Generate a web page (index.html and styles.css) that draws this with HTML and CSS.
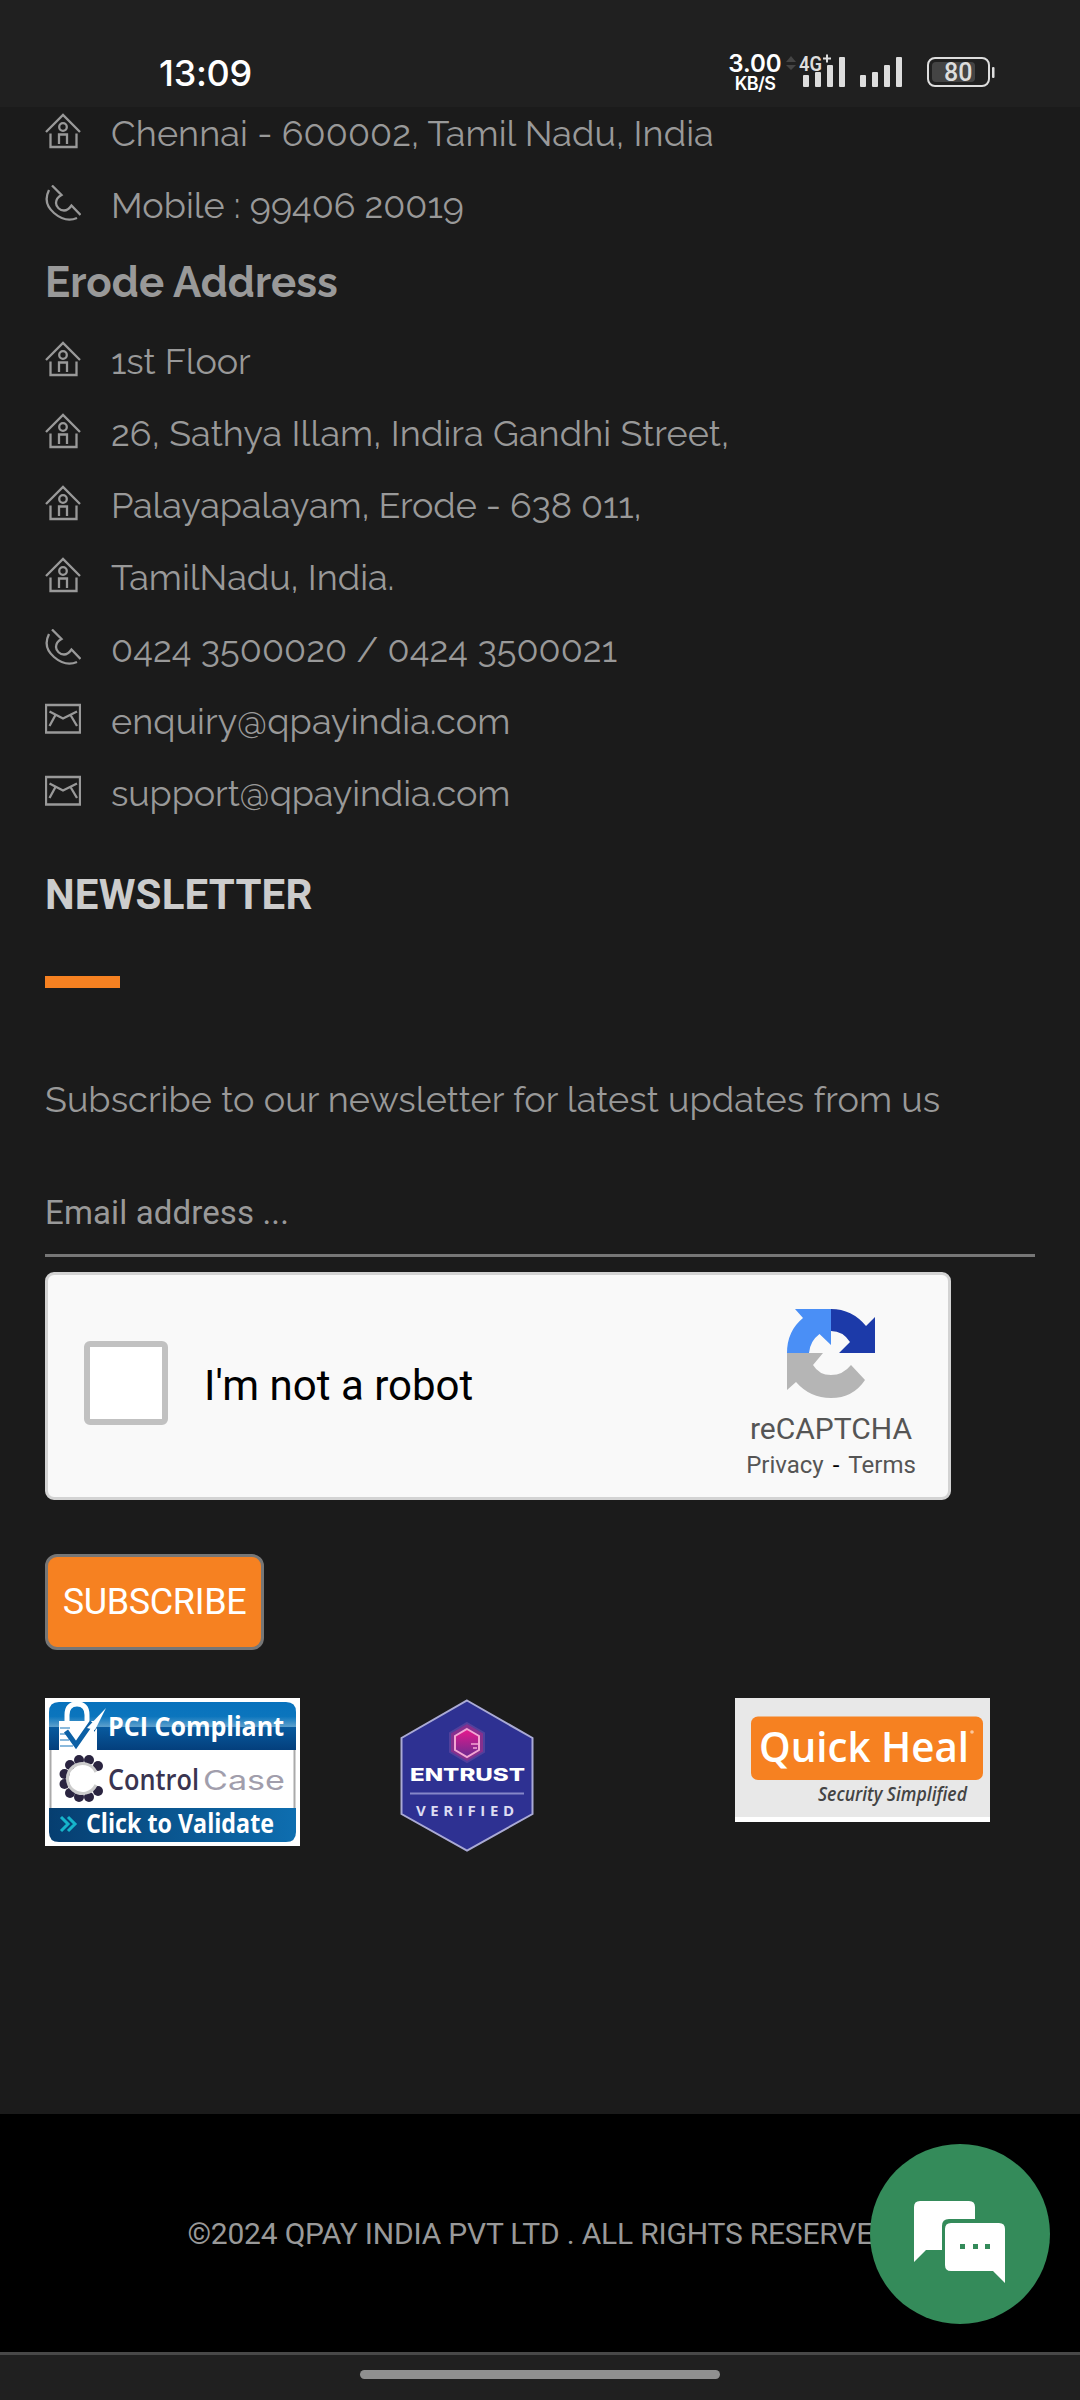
FILE: index.html
```html
<!DOCTYPE html>
<html lang="en">
<head>
<meta charset="utf-8">
<title>QPay India</title>
<link rel="stylesheet" href="styles.css">
</head>
<body>
<svg class="sprite" aria-hidden="true">
  <symbol id="home" viewBox="0 0 36 36"><path d="M1 19 18 2 35 19M5.500 20.500V34H31.500V20.500M14 31V21.500H22V31"/><circle cx="18" cy="14" r="3.800"/></symbol>
  <symbol id="phone" viewBox="0 0 36 36"><path d="M7 0.500 16.500 10Q11 13 11 18C11 22 15 25.500 19 25.500Q23 25.500 26.500 20.500L35.500 30M4 5C-1 15 2 22 9 28C16 34 23 37 32 33"/></symbol>
  <symbol id="mail" viewBox="0 0 36 36"><path d="M1 4H35V31.500H1ZM4.500 10.500 18 17.500 32 10.500M10.500 14 4.500 25M25.500 14 32 25"/></symbol>
</svg>
<div class="screen">
  <header class="status">
    <span class="clock">13:09</span>
    <div class="speed"><b>3.00</b><span>KB/S</span></div>
    <svg class="signals" width="120" height="46" viewBox="0 0 120 46">
      <path fill="#444" d="M0 12 5 6 10 12ZM0 15H10L5 20Z"/>
      <g fill="#ddd"><rect x="17" y="25" width="6" height="12" rx="1"/><rect x="29" y="22" width="6" height="15" rx="1"/><rect x="41" y="15" width="6" height="22" rx="1"/><rect x="53" y="7" width="6" height="30" rx="1"/><rect x="74" y="25" width="6" height="12" rx="1"/><rect x="86" y="22" width="6" height="15" rx="1"/><rect x="98" y="15" width="6" height="22" rx="1"/><rect x="110" y="7" width="6" height="30" rx="1"/></g>
      <text class="net" x="13" y="20.500" textLength="23" lengthAdjust="spacingAndGlyphs">4G</text>
      <path d="M37 8.500H45M41 4.500V12.500" stroke="#ddd" stroke-width="2"/>
    </svg>
    <svg class="battery" width="68" height="30" viewBox="0 0 68 30">
      <rect x="1" y="1" width="61" height="28" rx="7" fill="none" stroke="#ddd" stroke-width="2"/><rect x="5" y="5" width="43" height="20" rx="4" fill="#444"/><rect x="65" y="10" width="2.500" height="11" rx="1" fill="#ddd"/>
      <text class="level" x="17" y="24">80</text>
    </svg>
  </header>
  <main class="content">
    <ul class="contacts">
      <li><svg><use href="#home"/></svg><span class="wide">Chennai - 600002, Tamil Nadu, India</span></li>
      <li><svg><use href="#phone"/></svg><span>Mobile : 99406 20019</span></li>
    </ul>
    <h3 class="branch">Erode Address</h3>
    <ul class="contacts plain">
      <li><svg><use href="#home"/></svg><span class="tight">1st Floor</span></li>
      <li><svg><use href="#home"/></svg><span class="wide">26, Sathya Illam, Indira Gandhi Street,</span></li>
      <li><svg><use href="#home"/></svg><span class="tight">Palayapalayam, Erode - 638 011,</span></li>
      <li><svg><use href="#home"/></svg><span>TamilNadu, India.</span></li>
      <li><svg><use href="#phone"/></svg><span class="wide">0424 3500020 / 0424 3500021</span></li>
      <li><svg><use href="#mail"/></svg><span class="wide">enquiry@qpayindia.com</span></li>
      <li><svg><use href="#mail"/></svg><span class="tight">support@qpayindia.com</span></li>
    </ul>
    <h2 class="title">NEWSLETTER</h2>
    <div class="rule"></div>
    <p class="lead">Subscribe to our newsletter for latest updates from us</p>
    <div class="email">Email address ...</div>
    <div class="captcha">
      <div class="box"></div>
      <span class="robot">I'm not a robot</span>
      <div class="brand">
        <svg width="90" height="92" viewBox="0 0 90 92">
          <path fill="#4a8ff6" d="M9 1H45V37L33.500 26Q24 33 23 45H1Q1 23 17 10Z"/>
          <path fill="#1c3aa9" d="M45 1Q66 1 80 18L89 9V45H53L64 34Q57 23 45 23Z"/>
          <path fill="#b5b5b5" d="M1 45H37L27 57Q33 67 45 67Q57 67 65 57L79 72Q67 90 45 90Q24 90 10 74L1 82Z"/>
        </svg>
        <span class="name">reCAPTCHA</span>
        <span class="legal"><span>Privacy</span><i>-</i><span>Terms</span></span>
      </div>
    </div>
    <button class="subscribe">SUBSCRIBE</button>
    <div class="badges">
      <svg width="255" height="148" viewBox="0 0 255 148">
        <defs>
          <linearGradient id="pt" x2="0" y2="1"><stop stop-color="#0872bd"/><stop offset=".3" stop-color="#0b75bd"/><stop offset=".51" stop-color="#5b9fcc"/><stop offset=".53" stop-color="#085a9e"/><stop offset="1" stop-color="#043f7c"/></linearGradient>
          <linearGradient id="pb"><stop stop-color="#063e70"/><stop offset="1" stop-color="#0e6eb0"/></linearGradient>
        </defs>
        <rect width="255" height="148" fill="#fff"/>
        <path d="M4 52V14Q4 4 14 4H241Q251 4 251 14V52Z" fill="url(#pt)"/>
        <path d="M5.500 52V111M249.500 52V111" stroke="#aaa" stroke-width="2"/>
        <path d="M4 110H251V134Q251 144 241 144H14Q4 144 4 134Z" fill="url(#pb)"/>
        <path d="M22 25V17Q22 6 32 6T42 17V25" fill="none" stroke="#fff" stroke-width="5"/>
        <path d="M14 23H49V34L52 30V52H14Z" fill="#fff"/>
        <path d="M15 30H25M15 36H23M15 42H24M15 48H28" stroke="#8ab9dc" stroke-width="2"/>
        <path d="M21 33 31 47 47 24" fill="none" stroke="#0c60a5" stroke-width="5"/>
        <path d="M42 30 61 10 50 32Z" fill="#fff"/>
        <text x="63" y="38" class="pci" textLength="176" lengthAdjust="spacingAndGlyphs">PCI Compliant</text>
        <g fill="#2a2440"><circle cx="53" cy="68" r="5"/><circle cx="44" cy="62" r="5"/><circle cx="34" cy="62" r="5"/><circle cx="25" cy="67" r="5"/><circle cx="19.500" cy="76" r="5"/><circle cx="19.500" cy="86" r="5"/><circle cx="25" cy="95" r="5"/><circle cx="34" cy="99" r="5"/><circle cx="44" cy="99" r="5"/><circle cx="53" cy="93" r="5"/></g>
        <path d="M51 74A15 15 0 1 0 51 87" fill="none" stroke="#ccc" stroke-width="3"/>
        <text x="63" y="92" class="control" textLength="91" lengthAdjust="spacingAndGlyphs">Control</text>
        <text x="158" y="92" class="case" textLength="82" lengthAdjust="spacingAndGlyphs">Case</text>
        <path d="M16 119 23 126 16 133M23 119 30 126 23 133" fill="none" stroke="#16b5cb" stroke-width="3"/>
        <text x="41" y="135" class="pci" textLength="188" lengthAdjust="spacingAndGlyphs">Click to Validate</text>
      </svg>
      <svg class="entrust" width="138" height="154" viewBox="0 0 138 154">
        <defs><linearGradient id="eg" x2="0" y2="1"><stop stop-color="#e8188c"/><stop offset="1" stop-color="#6a2c91"/></linearGradient></defs>
        <path d="M69 2.500 134.500 40V116L69 152.500 3.500 116V40Z" fill="#2e3192" stroke="#aaaad5" stroke-width="2"/>
        <path d="M69 25 86 35V54L69 64 52 54V35Z" fill="#86308e" stroke="#51409c" stroke-width="2"/>
        <path d="M69 31 81 38V52L69 59 57 52V38Z" fill="url(#eg)" stroke="#f3a5d4" stroke-width="2"/>
        <path d="M73 46H81M75 50H79" stroke="#f3a5d4" stroke-width="1.500"/>
        <text x="12" y="83" class="ent" textLength="115" lengthAdjust="spacingAndGlyphs">ENTRUST</text>
        <path d="M12 95.500H126" stroke="#8587c8" stroke-width="2"/>
        <text x="18" y="117.500" class="ver" textLength="98">VERIFIED</text>
      </svg>
      <svg class="heal" width="255" height="124" viewBox="0 0 255 124">
        <rect width="255" height="124" fill="#fff"/><rect width="255" height="119" fill="#e8e8e8"/>
        <rect x="16" y="18.500" width="232" height="63.500" rx="7" fill="#f68121"/>
        <text x="24" y="64" class="qh" textLength="210" lengthAdjust="spacingAndGlyphs">Quick Heal</text>
        <circle cx="237" cy="34" r="1.800" fill="#fbc79c"/>
        <text x="83" y="103" class="sec" textLength="149" lengthAdjust="spacingAndGlyphs">Security Simplified</text>
      </svg>
    </div>
  </main>
  <footer class="footer"><span>©2024 QPAY INDIA PVT LTD . ALL RIGHTS RESERVED</span>
    <div class="chat">
      <svg width="92" height="84" viewBox="0 0 92 84"><path fill="#fff" d="M6 0H55Q61 0 61 6V18H35Q28 18 28 25V49H12L0 61V6Q0 0 6 0Z"/><path fill="#fff" d="M37 22H85Q91 22 91 28V82L79 70H37Q31 70 31 64V28Q31 22 37 22Z"/><path fill="#348b5a" d="M46 43H51V48H46ZM59 43H64V48H59ZM71 43H76V48H71Z"/></svg>
    </div>
  </footer>
  <nav class="gesture"><div></div></nav>
</div>
</body>
</html>
```
FILE: styles.css
```css
* { box-sizing: border-box; }
body { margin: 0; background: #1b1b1b; color: #999; font-family: Raleway, Lato, sans-serif; }
h2, h3, p, ul { margin: 0; padding: 0; }
.sprite { position: absolute; width: 0; height: 0; }
.screen { width: 1080px; height: 2400px; display: flex; flex-direction: column; overflow: hidden; }
.status { height: 107px; flex: none; background: #202020; display: flex; color: #fff; font-family: Inter, sans-serif; position: relative; z-index: 1; }
.clock { margin: 50px 0 0 159px; width: 568px; font-size: 36px; line-height: 46px; font-weight: 500; letter-spacing: -.3px; }
.speed { width: 56px; margin-top: 52px; display: flex; flex-direction: column; align-items: center; font-weight: 600; }
.speed b { font-size: 24px; font-weight: 600; line-height: 24px; }
.speed span { font-size: 18px; line-height: 16px; letter-spacing: -.6px; }
.signals { margin: 50px 0 0 3px; }
.battery { margin: 57px 0 0 21px; }
.net { font: 600 21px Roboto, sans-serif; fill: #ddd; }
.level { font: 500 25px Roboto, sans-serif; fill: #ddd; }
.content { height: 2007px; flex: none; padding: 0 45px; display: flex; flex-direction: column; align-items: flex-start; }
.contacts { list-style: none; margin-top: -11px; font-size: 36px; line-height: 74px; }
.contacts.plain { margin-top: 0; }
.contacts li { display: flex; gap: 30px; height: 72px; white-space: nowrap; }
.contacts svg { width: 36px; height: 36px; margin-top: 17px; fill: none; stroke: #999; stroke-width: 2.3; }
.wide { letter-spacing: .1px; }
.tight { letter-spacing: -.1px; }
.branch { height: 84px; font-size: 42px; line-height: 86px; font-weight: 700; letter-spacing: .07px; }
.title { margin-top: 44px; font: 700 42px/46px Roboto, sans-serif; color: #ccc; letter-spacing: .2px; }
.rule { width: 75px; height: 12px; margin-top: 58px; background: #f68121; }
.lead { margin-top: 89px; font-size: 36px; line-height: 44px; letter-spacing: .06px; white-space: nowrap; }
.email { width: 990px; height: 92px; margin-top: 44px; padding-top: 28px; border-bottom: 3px solid #767676; font: 33px/40px Roboto, sans-serif; letter-spacing: .13px; }
.captcha { width: 906px; height: 228px; margin-top: 15px; border: 3px solid #d3d3d3; border-radius: 9px; background: #f9f9f9; display: flex; font-family: Roboto, sans-serif; }
.box { width: 84px; height: 84px; margin: 66px 36px 0; border: 6px solid #c1c1c1; border-radius: 6px; background: #fff; }
.robot { width: 532px; margin-top: 86px; font-size: 42px; line-height: 50px; color: #000; }
.brand { display: flex; flex-direction: column; align-items: center; margin-top: 33px; width: 190px; color: #555; }
.name { font-size: 30px; line-height: 36px; margin-top: 11px; }
.legal { display: flex; gap: 9px; font-size: 24px; line-height: 28px; margin-top: 4px; }
.legal i { color: #000; font-style: normal; }
.subscribe { width: 219px; height: 96px; margin-top: 54px; padding: 0; border: 3px solid #767676; border-radius: 12px; background: #f68121; color: #fff; font: 36px Roboto, sans-serif; letter-spacing: -.35px; }
.badges { display: flex; align-items: flex-start; margin-top: 48px; }
.entrust { margin-left: 98px; }
.heal { margin-left: 199px; }
.pci { font: 700 26px "Open Sans", sans-serif; fill: #fff; }
.control { font: 600 28px "Open Sans", sans-serif; fill: #3a3450; }
.case { font: 400 27px Inter, sans-serif; fill: #a19eac; }
.ent { font: 800 17px Inter, sans-serif; fill: #fff; }
.ver { font: 700 15px "Open Sans", sans-serif; fill: #dcdcf2; }
.qh { font: 600 41px "Open Sans", sans-serif; fill: #fff; }
.sec { font: italic 600 19px "Open Sans", sans-serif; fill: #444; }
.footer { height: 238px; flex: none; background: #000; display: flex; justify-content: center; position: relative; padding-top: 102px; font: 30px/36px Roboto, sans-serif; letter-spacing: -.2px; white-space: nowrap; }
.chat { position: absolute; right: 30px; top: 30px; width: 180px; height: 180px; border-radius: 50%; background: #348b5a; display: flex; justify-content: center; padding-top: 57px; }
.gesture { height: 48px; flex: none; background: #202020; border-top: 3px solid #484848; display: flex; justify-content: center; padding-top: 15px; }
.gesture div { width: 360px; height: 9px; border-radius: 5px; background: #909090; }
```
